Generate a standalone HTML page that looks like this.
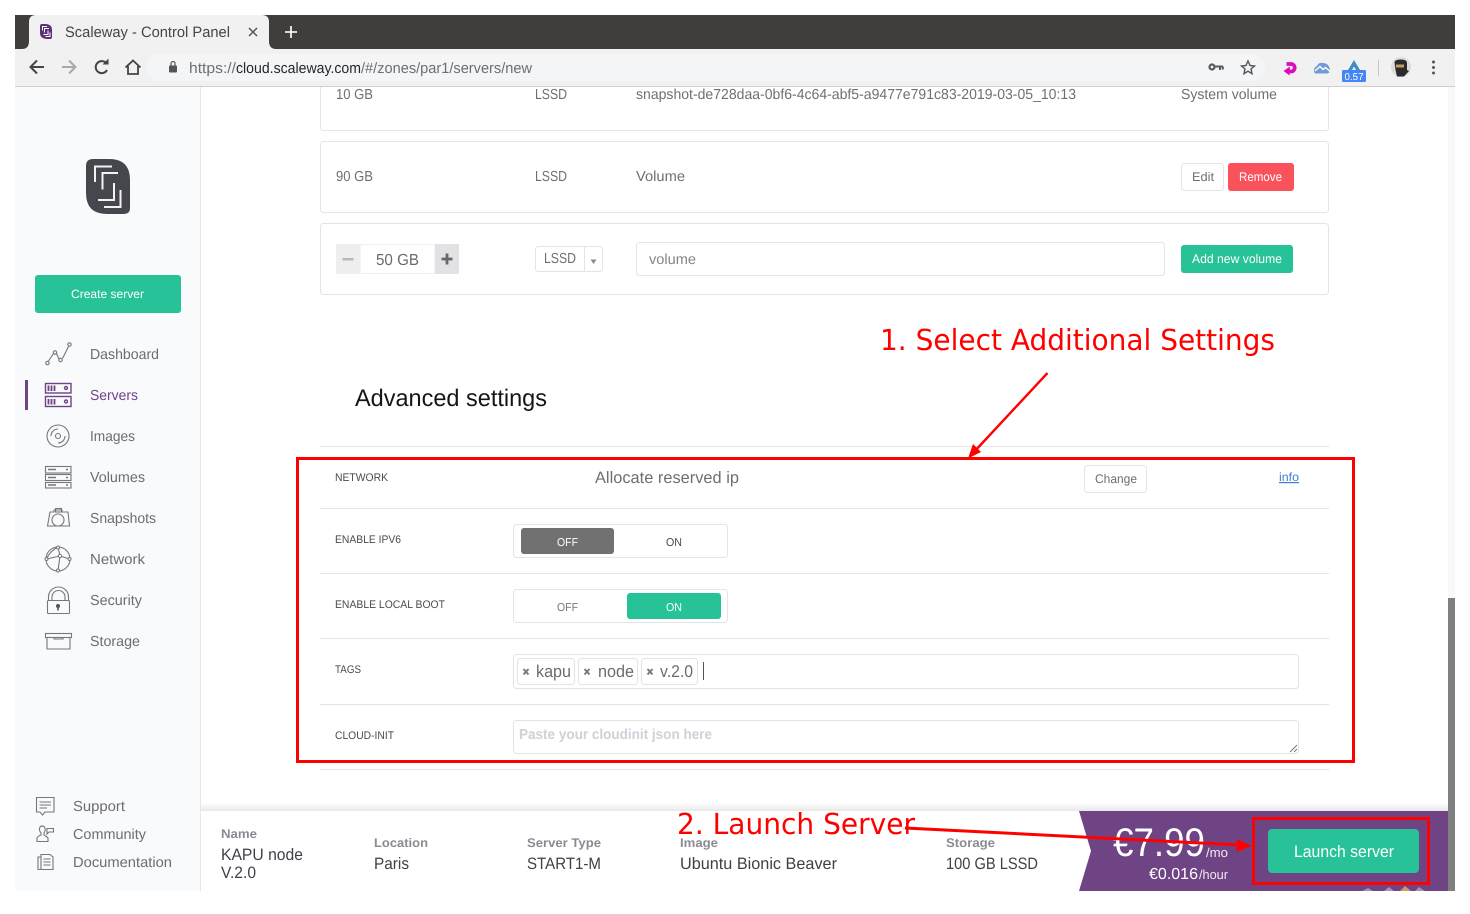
<!DOCTYPE html>
<html><head><meta charset="utf-8"><title>Scaleway - Control Panel</title>
<style>
html,body{margin:0;padding:0;background:#fff;width:1470px;height:914px;overflow:hidden}
svg{display:block}
text{font-family:"Liberation Sans",sans-serif;text-rendering:geometricPrecision;white-space:pre}
.a{font-family:"DejaVu Sans",sans-serif;fill:#f00}
.n{font-size:14.5px;fill:#6d6c70}
.r{font-size:14.5px;fill:#6f6e72}
.l{font-size:11px;fill:#4a4a50}
.h{font-size:12.5px;font-weight:bold;fill:#8a8b92}
.v{font-size:16.5px;fill:#3e4148}
.i{fill:none;stroke:#77767a;stroke-width:1.1}
.p{fill:none;stroke:#6f4485;stroke-width:1.4}
</style></head><body>
<svg width="1470" height="914" viewBox="0 0 1470 914" xmlns="http://www.w3.org/2000/svg">
<defs><linearGradient id="sh" x1="0" y1="0" x2="0" y2="1"><stop offset="0" stop-color="#000" stop-opacity="0"/><stop offset="1" stop-color="#000" stop-opacity=".09"/></linearGradient></defs>
<rect width="1470" height="914" fill="#fff"/>

<!-- content + sidebar -->
<rect x="15" y="87" width="185" height="804" fill="#f9fafc"/>
<rect x="200" y="87" width="1" height="804" fill="#e6e7ea"/>
<rect x="1448" y="87" width="7" height="804" fill="#f9f9f9"/>
<rect x="1448" y="598" width="7" height="293" fill="#7f7f7f"/>

<!-- chrome -->
<rect x="15" y="15" width="1440" height="34" fill="#3f3e3a"/>
<path d="M22 49Q29 49 29 41V22Q29 15 36 15H262Q269 15 269 22V41Q269 49 276 49Z" fill="#f1f1f1"/>
<rect x="15" y="49" width="1440" height="37" fill="#f1f1f1"/>
<rect x="15" y="86" width="1440" height="1" fill="#cfcfcf"/>
<rect x="146" y="54" width="1119" height="27" rx="13.5" fill="#f4f5f7"/>
<path d="M40 26Q40 24 42 24H46Q52 24.500 52 30V37Q52 39 50 39H47Q40 38.500 40 33Z" fill="#5d2f75"/>
<path d="M42.500 30.500V26.500H47M44.500 32.500V28.500H49M43.500 34.500H48V30.500M45.500 36.500H50V32.500" fill="none" stroke="#fff" stroke-width="1"/>
<text x="65" y="37" font-size="15" fill="#45454a" textLength="165" lengthAdjust="spacingAndGlyphs">Scaleway - Control Panel</text>
<path d="M233 0" fill="none"/>
<path d="M232.500 32" fill="none"/>
<path d="M249 28L257 36M257 28L249 36" stroke="#555" stroke-width="1.500"/>
<path d="M291 26V38M285 32H297" stroke="#f1f1f1" stroke-width="1.800"/>
<path d="M44 67H31M37 60.500L30.500 67L37 73.500" fill="none" stroke="#444" stroke-width="2"/>
<path d="M62 67H75M69 60.500L75.500 67L69 73.500" fill="none" stroke="#a9a9a9" stroke-width="2"/>
<path d="M106.500 63.500A6 6 0 1 0 107 70" fill="none" stroke="#444" stroke-width="2"/><path d="M102.500 64.500H108.500V58.500Z" fill="#444"/>
<path d="M125.500 67.500L133 60.500L140.500 67.500M128 66V74H138V66" fill="none" stroke="#444" stroke-width="1.800"/>
<rect x="169" y="65.500" width="8" height="7" rx="1" fill="#555"/><path d="M171 66V63.500A2 2 0 0 1 175 63.500V66" fill="none" stroke="#555" stroke-width="1.200"/>
<text x="189" y="73" font-size="15" fill="#6b6f75" textLength="47" lengthAdjust="spacingAndGlyphs">https://</text>
<text x="236" y="73" font-size="15" fill="#25272b" textLength="125" lengthAdjust="spacingAndGlyphs">cloud.scaleway.com</text>
<text x="361" y="73" font-size="15" fill="#6b6f75" textLength="171" lengthAdjust="spacingAndGlyphs">/#/zones/par1/servers/new</text>
<circle cx="1212" cy="67" r="2.500" fill="none" stroke="#5a5a5a" stroke-width="2.200"/><path d="M1215 66.500H1223M1220 66.500V70M1222.800 66.500V69.500" stroke="#5a5a5a" stroke-width="2" fill="none"/>
<path d="M1248 61L1250 65.500L1254.500 66L1251 69L1252 73.700L1248 71.200L1244 73.700L1245 69L1241.500 66L1246 65.500Z" fill="none" stroke="#555" stroke-width="1.400"/>
<path d="M1286.500 64H1291.500A3.800 3.800 0 0 1 1291.500 71.500H1288.500" fill="none" stroke="#d90dbb" stroke-width="3.800"/><path d="M1290 66.500L1283.500 71L1289.500 75.500Z" fill="#d90dbb"/>
<path d="M1314 71Q1314 67 1317 66Q1319 62 1323 63Q1328 63 1329.500 68Q1331 73 1327 73.500H1316Q1314 73.500 1314 71Z" fill="#6f9ad3"/><path d="M1315 71L1320 66.500L1323 69.500L1325.500 67.500L1330 71.500" fill="none" stroke="#fff" stroke-width="1.400"/>
<path d="M1354 60L1360 70H1356L1354 66.500L1352 70H1348Z" fill="#3f8fc4"/>
<rect x="1342" y="70" width="24" height="12" rx="1.500" fill="#4285f4"/>
<text x="1344.500" y="80" font-size="10" fill="#fff" textLength="19" lengthAdjust="spacingAndGlyphs">0.57</text>
<rect x="1378" y="60" width="1" height="16" fill="#c9c9c9"/>
<circle cx="1401" cy="67" r="10" fill="#dcdcdc"/>
<path d="M1394.500 62Q1395 59.500 1401 59.500Q1407 59.500 1407 63V70L1409 71L1404 76.500H1397L1395.500 70Z" fill="#2b2b2b"/><rect x="1396" y="64.500" width="8" height="3" fill="#c99a6b"/>
<circle cx="1433.500" cy="62" r="1.500" fill="#555"/><circle cx="1433.500" cy="67.500" r="1.500" fill="#555"/><circle cx="1433.500" cy="73" r="1.500" fill="#555"/>

<!-- sidebar logo + button -->
<path d="M93 159H109Q130 159 130 180V208Q130 214 124 214H107Q86 214 86 193V166Q86 159 93 159Z" fill="#45474d"/>
<path d="M112 166.500H95V182M118 173H102.500V189.500M98 200H114V183M104 207H120.500V190" fill="none" stroke="#f2f2f2" stroke-width="2"/>
<rect x="35" y="275" width="146" height="38" rx="3" fill="#27c297"/>
<text x="71" y="298" font-size="12" fill="#fff" textLength="73" lengthAdjust="spacingAndGlyphs">Create server</text>

<!-- nav -->
<rect x="25" y="380" width="3" height="30" fill="#6f4485"/>
<text class="n" x="90" y="359" textLength="69" lengthAdjust="spacingAndGlyphs">Dashboard</text>
<text class="n" x="90" y="400" textLength="48" lengthAdjust="spacingAndGlyphs" style="fill:#6f4485">Servers</text>
<text class="n" x="90" y="441" textLength="45" lengthAdjust="spacingAndGlyphs">Images</text>
<text class="n" x="90" y="482" textLength="55" lengthAdjust="spacingAndGlyphs">Volumes</text>
<text class="n" x="90" y="523" textLength="66" lengthAdjust="spacingAndGlyphs">Snapshots</text>
<text class="n" x="90" y="564" textLength="55" lengthAdjust="spacingAndGlyphs">Network</text>
<text class="n" x="90" y="605" textLength="52" lengthAdjust="spacingAndGlyphs">Security</text>
<text class="n" x="90" y="646" textLength="50" lengthAdjust="spacingAndGlyphs">Storage</text>

<path class="i" d="M48.500 361L53.500 353.500M56.500 353.500L59 359M62.500 358.500L68.500 346.500"/>
<circle class="i" cx="47.500" cy="363" r="1.700"/><circle class="i" cx="55" cy="352.500" r="1.700"/><circle class="i" cx="60.500" cy="360" r="1.700"/><circle class="i" cx="69.500" cy="344.500" r="1.700"/>

<rect class="p" x="45.500" y="383.500" width="25.500" height="9.500"/><rect class="p" x="45.500" y="396.500" width="25.500" height="10"/>
<path d="M48.500 385.500V391M51.500 385.500V391M54.500 385.500V391M48.500 399V404.500M51.500 399V404.500M54.500 399V404.500" stroke="#6f4485" stroke-width="1.800"/>
<circle class="p" cx="66" cy="388" r="1.500"/><circle class="p" cx="66" cy="401.500" r="1.500"/>

<circle class="i" cx="58" cy="436" r="11"/><circle class="i" cx="58" cy="436" r="2.500"/>
<path class="i" d="M51 436A7 7 0 0 1 58 429M65 436A7 7 0 0 1 58 443"/>

<rect class="i" x="45.500" y="466.500" width="25.500" height="6.500"/><rect class="i" x="45.500" y="474.500" width="25.500" height="6"/><rect class="i" x="45.500" y="482.500" width="25.500" height="5.500"/>
<path d="M48 469.500H56M48 477.500H56M48 485H56M66 469.500H68M66 477.500H68M66 485H68" stroke="#77767a" stroke-width="1.500"/>

<path class="i" d="M50 512H54V510H62V512H68L69.500 526H47.500Z"/><rect class="i" x="55.500" y="508.500" width="6" height="3.500"/><circle class="i" cx="58" cy="520" r="6"/>

<circle class="i" cx="58" cy="559" r="12"/>
<path class="i" d="M58 547Q50 551 46.500 559M60 556L46.500 559M60 556L58 547M60 556L69.500 559M60 556L58 570.500"/>
<circle cx="60" cy="556" r="1.700" fill="#f9fafc" stroke="#77767a"/><circle cx="58" cy="547.500" r="1.500" fill="#f9fafc" stroke="#77767a"/><circle cx="46.500" cy="559" r="1.500" fill="#f9fafc" stroke="#77767a"/><circle cx="69.500" cy="559" r="1.500" fill="#f9fafc" stroke="#77767a"/><circle cx="58" cy="570.500" r="1.500" fill="#f9fafc" stroke="#77767a"/>

<rect class="i" x="47.500" y="600.500" width="22" height="13" rx="1"/>
<path class="i" d="M48.500 600V597A10 10 0 0 1 68.500 597V600M52 600V597A6.500 6.500 0 0 1 65 597V600"/>
<circle cx="58" cy="606" r="2" fill="#55555a"/><rect x="57.200" y="606" width="1.600" height="4.500" fill="#55555a"/>

<rect class="i" x="45.500" y="633.500" width="26" height="4"/><path class="i" d="M47 637.500V649H70V637.500M54 637.500V639H63V637.500"/>

<!-- bottom nav -->
<path class="i" d="M36.500 797.500H54V812H45L42.500 815L40 812H36.500Z"/><path class="i" d="M39.500 802H51M39.500 805H51M39.500 808H47"/>
<text class="n" x="73" y="811" textLength="52" lengthAdjust="spacingAndGlyphs">Support</text>
<path class="i" d="M37 841.500V838Q38 836 41 835V833Q38.500 830 40 827Q42 825 44.500 827Q46 830 44 833V835Q46 836 48 838V841.500ZM47 828.500H53.500V832H49L47 834Z"/>
<text class="n" x="73" y="839" textLength="73" lengthAdjust="spacingAndGlyphs">Community</text>
<path class="i" d="M41 854.500H50L53 857V869.500H41ZM41 857H38V869.500H41M43.500 859H50.500M43.500 862H50.500M43.500 865H50.500"/>
<text class="n" x="73" y="867" textLength="99" lengthAdjust="spacingAndGlyphs">Documentation</text>

<!-- volume boxes -->
<path d="M320.500 87V127.500Q320.500 130.500 323.500 130.500H1325.500Q1328.500 130.500 1328.500 127.500V87" fill="none" stroke="#e4e4e6"/>
<text class="r" x="336" y="99" textLength="37" lengthAdjust="spacingAndGlyphs">10 GB</text>
<text class="r" x="535" y="99" textLength="32" lengthAdjust="spacingAndGlyphs">LSSD</text>
<text class="r" x="636" y="99" textLength="440" lengthAdjust="spacingAndGlyphs">snapshot-de728daa-0bf6-4c64-abf5-a9477e791c83-2019-03-05_10:13</text>
<text class="r" x="1181" y="99" textLength="96" lengthAdjust="spacingAndGlyphs">System volume</text>

<rect x="320.500" y="141.500" width="1008" height="71" rx="3" fill="none" stroke="#e4e4e6"/>
<text class="r" x="336" y="181" textLength="37" lengthAdjust="spacingAndGlyphs">90 GB</text>
<text class="r" x="535" y="181" textLength="32" lengthAdjust="spacingAndGlyphs">LSSD</text>
<text class="r" x="636" y="181" textLength="49" lengthAdjust="spacingAndGlyphs">Volume</text>
<rect x="1181.500" y="163.500" width="42" height="27" rx="3" fill="#fff" stroke="#e4e4e6"/>
<text x="1192" y="181" font-size="12.500" fill="#6f6e72" textLength="22" lengthAdjust="spacingAndGlyphs">Edit</text>
<rect x="1228" y="163" width="66" height="28" rx="3" fill="#f9525a"/>
<text x="1239" y="181" font-size="12.500" fill="#fff" textLength="43" lengthAdjust="spacingAndGlyphs">Remove</text>

<rect x="320.500" y="223.500" width="1008" height="71" rx="3" fill="none" stroke="#e4e4e6"/>
<rect x="336" y="244" width="24" height="30" fill="#eeeeef"/>
<rect x="360" y="244.500" width="75" height="29" fill="#fff" stroke="#eeeeef"/>
<rect x="435" y="244" width="24" height="30" fill="#e1e2e4"/>
<rect x="342.500" y="258" width="11" height="2.500" fill="#b9b9bb"/>
<path d="M441.500 259H452.500M447 253.500V264.500" stroke="#66666b" stroke-width="2.800"/>
<text x="376" y="265" font-size="16" fill="#6b6a6e" textLength="43" lengthAdjust="spacingAndGlyphs">50 GB</text>
<rect x="535.500" y="246.500" width="67" height="25" rx="3" fill="#fff" stroke="#e4e4e6"/>
<rect x="584" y="247" width="1" height="24" fill="#e4e4e6"/>
<text x="544" y="263" font-size="14.500" fill="#6f6e72" textLength="32" lengthAdjust="spacingAndGlyphs">LSSD</text>
<path d="M590.500 259.500H596.500L593.500 264Z" fill="#8a8a8e"/>
<rect x="636.500" y="242.500" width="528" height="33" rx="3" fill="#fff" stroke="#e4e4e6"/>
<text x="649" y="264" font-size="14.500" fill="#85858a" textLength="47" lengthAdjust="spacingAndGlyphs">volume</text>
<rect x="1181" y="245" width="112" height="28" rx="3" fill="#27c297"/>
<text x="1192" y="263" font-size="12.500" fill="#fff" textLength="90" lengthAdjust="spacingAndGlyphs">Add new volume</text>

<!-- advanced -->
<text x="355" y="406" font-size="24" fill="#151515" textLength="192" lengthAdjust="spacingAndGlyphs">Advanced settings</text>
<rect x="320" y="446" width="1009" height="1" fill="#e4e4e6"/>
<rect x="320" y="508" width="1009" height="1" fill="#e4e4e6"/>
<rect x="320" y="573" width="1009" height="1" fill="#e4e4e6"/>
<rect x="320" y="638" width="1009" height="1" fill="#e4e4e6"/>
<rect x="320" y="704" width="1009" height="1" fill="#e4e4e6"/>
<rect x="320" y="769" width="1009" height="1" fill="#e4e4e6"/>

<text class="l" x="335" y="481" textLength="53" lengthAdjust="spacingAndGlyphs">NETWORK</text>
<text x="595" y="483" font-size="16.500" fill="#6f6e72" textLength="144" lengthAdjust="spacingAndGlyphs">Allocate reserved ip</text>
<rect x="1084.500" y="465.500" width="62" height="27" rx="3" fill="#fff" stroke="#e4e4e6"/>
<text x="1095" y="483" font-size="12.500" fill="#6f6e72" textLength="42" lengthAdjust="spacingAndGlyphs">Change</text>
<text x="1279" y="481" font-size="12" fill="#3e7fd0" textLength="20" lengthAdjust="spacingAndGlyphs" text-decoration="underline">info</text>

<text class="l" x="335" y="543" textLength="66" lengthAdjust="spacingAndGlyphs">ENABLE IPV6</text>
<rect x="513.500" y="524.500" width="214" height="33" rx="3" fill="#fff" stroke="#e4e4e6"/>
<rect x="521" y="528" width="93" height="26" rx="3" fill="#717171"/>
<text x="557" y="546" font-size="11.500" fill="#fff" textLength="21" lengthAdjust="spacingAndGlyphs">OFF</text>
<text x="666" y="546" font-size="11.500" fill="#4a4a50" textLength="16" lengthAdjust="spacingAndGlyphs">ON</text>

<text class="l" x="335" y="608" textLength="110" lengthAdjust="spacingAndGlyphs">ENABLE LOCAL BOOT</text>
<rect x="513.500" y="589.500" width="214" height="33" rx="3" fill="#fff" stroke="#e4e4e6"/>
<rect x="627" y="593" width="94" height="26" rx="3" fill="#27c297"/>
<text x="557" y="611" font-size="11.500" fill="#77767a" textLength="21" lengthAdjust="spacingAndGlyphs">OFF</text>
<text x="666" y="611" font-size="11.500" fill="#fff" textLength="16" lengthAdjust="spacingAndGlyphs">ON</text>

<text class="l" x="335" y="673" textLength="26" lengthAdjust="spacingAndGlyphs">TAGS</text>
<rect x="513.500" y="654.500" width="785" height="34" rx="3" fill="#fff" stroke="#e4e4e6"/>
<rect x="517.500" y="658.500" width="57" height="26" rx="3" fill="#fff" stroke="#e4e4e6"/>
<rect x="578.500" y="658.500" width="59" height="26" rx="3" fill="#fff" stroke="#e4e4e6"/>
<rect x="641.500" y="658.500" width="56" height="26" rx="3" fill="#fff" stroke="#e4e4e6"/>
<path d="M523.500 669L528.500 674.500M528.500 669L523.500 674.500M584.500 669L589.500 674.500M589.500 669L584.500 674.500M647.500 669L652.500 674.500M652.500 669L647.500 674.500" stroke="#77767a" stroke-width="1.900"/>
<text x="536" y="677" font-size="17" fill="#6a6c72" textLength="35" lengthAdjust="spacingAndGlyphs">kapu</text>
<text x="598" y="677" font-size="17" fill="#6a6c72" textLength="36" lengthAdjust="spacingAndGlyphs">node</text>
<text x="660" y="677" font-size="17" fill="#6a6c72" textLength="33" lengthAdjust="spacingAndGlyphs">v.2.0</text>
<rect x="703" y="662" width="1" height="18" fill="#555"/>

<text class="l" x="335" y="739" textLength="59" lengthAdjust="spacingAndGlyphs">CLOUD-INIT</text>
<rect x="513.500" y="720.500" width="785" height="33" rx="3" fill="#fff" stroke="#e4e4e6"/>
<text x="519" y="739" font-size="14.500" font-weight="bold" fill="#ced1d8" textLength="193" lengthAdjust="spacingAndGlyphs">Paste your cloudinit json here</text>
<path d="M1290 752L1297 745M1294 752L1297 749" stroke="#777" stroke-width="1"/>

<!-- bottom bar -->
<rect x="201" y="803" width="1247" height="8" fill="url(#sh)"/>
<rect x="201" y="811" width="1247" height="80" fill="#fff"/>
<text class="h" x="221" y="838" textLength="36" lengthAdjust="spacingAndGlyphs">Name</text>
<text class="v" x="221" y="860" textLength="82" lengthAdjust="spacingAndGlyphs">KAPU node</text>
<text class="v" x="221" y="878" textLength="35" lengthAdjust="spacingAndGlyphs">V.2.0</text>
<text class="h" x="374" y="847" textLength="54" lengthAdjust="spacingAndGlyphs">Location</text>
<text class="v" x="374" y="869" textLength="35" lengthAdjust="spacingAndGlyphs">Paris</text>
<text class="h" x="527" y="847" textLength="74" lengthAdjust="spacingAndGlyphs">Server Type</text>
<text class="v" x="527" y="869" textLength="74" lengthAdjust="spacingAndGlyphs">START1-M</text>
<text class="h" x="680" y="847" textLength="38" lengthAdjust="spacingAndGlyphs">Image</text>
<text class="v" x="680" y="869" textLength="157" lengthAdjust="spacingAndGlyphs">Ubuntu Bionic Beaver</text>
<text class="h" x="946" y="847" textLength="49" lengthAdjust="spacingAndGlyphs">Storage</text>
<text class="v" x="946" y="869" textLength="92" lengthAdjust="spacingAndGlyphs">100 GB LSSD</text>

<path d="M1079 811H1448V891H1079L1091 851Z" fill="#6f4485"/>
<text x="1113" y="856" font-size="40" fill="#fff" textLength="92" lengthAdjust="spacingAndGlyphs">€7.99</text>
<text x="1206" y="857" font-size="13" fill="#f0eaf3" textLength="22" lengthAdjust="spacingAndGlyphs">/mo</text>
<text x="1149" y="879" font-size="16" fill="#fff" textLength="49" lengthAdjust="spacingAndGlyphs">€0.016</text>
<text x="1199" y="879" font-size="13" fill="#f0eaf3" textLength="29" lengthAdjust="spacingAndGlyphs">/hour</text>
<rect x="1268" y="829" width="151" height="44" rx="4" fill="#27c297"/>
<text x="1294" y="857" font-size="16.500" fill="#fff" textLength="100" lengthAdjust="spacingAndGlyphs">Launch server</text>
<path d="M1362 891L1368 888L1373 891ZM1384 891L1389 887L1394 891Z" fill="#a58fb3"/><path d="M1400 891L1405 886L1411 891Z" fill="#c99a6b"/><path d="M1415 891L1419 887L1425 891Z" fill="#a58fb3"/>

<!-- annotations -->
<text class="a" x="880" y="350" font-size="29" textLength="395" lengthAdjust="spacingAndGlyphs">1. Select Additional Settings</text>
<path d="M1047.500 373L974 452" stroke="#f00" stroke-width="2.400" fill="none"/>
<path d="M968 458.500L973 444L981 452Z" fill="#f00"/>
<rect x="297.500" y="458.500" width="1056" height="303" fill="none" stroke="#f00" stroke-width="3"/>
<text class="a" x="677" y="834" font-size="29" textLength="238" lengthAdjust="spacingAndGlyphs">2. Launch Server</text>
<path d="M905 828L1240 845" stroke="#f00" stroke-width="3" fill="none"/>
<path d="M1252 846L1237 839L1236.500 852Z" fill="#f00"/>
<rect x="1253.500" y="818.500" width="175" height="65" fill="none" stroke="#f00" stroke-width="3"/>
</svg>
</body></html>
